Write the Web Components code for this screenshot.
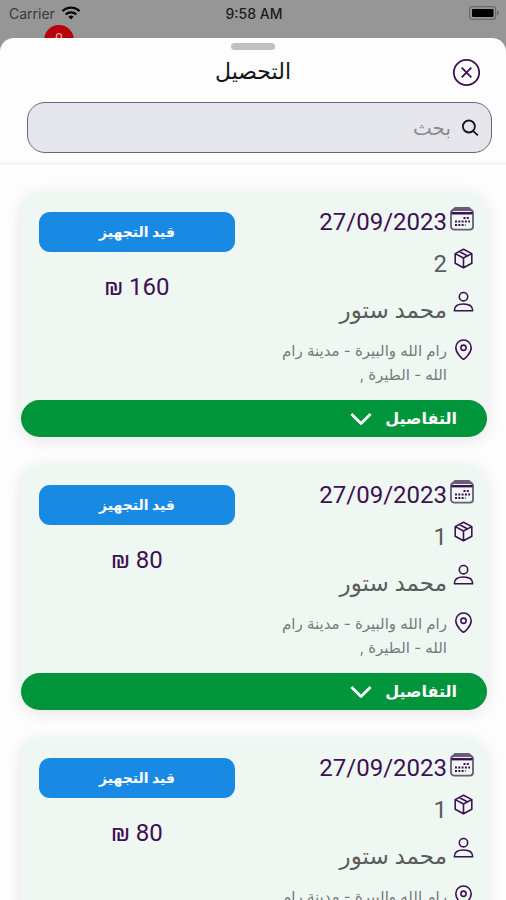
<!DOCTYPE html>
<html lang="ar" dir="rtl">
<head>
<meta charset="utf-8">
<meta name="viewport" content="width=device-width, initial-scale=1">
<title>التحصيل</title>
<style>
  body { margin: 0; font-family: Roboto, "DejaVu Sans", sans-serif; color: #3d0f54; background: #969696; }
</style>
</head>
<body>
<collection-app></collection-app>
<script>
const ICONS = {
  calendar: '<g stroke="#6b5a78"><rect x="1" y="3" width="22" height="19.600" rx="3"/><path d="M2.500 3.500l2.500-2.500h14l2.500 2.500"/></g><path d="M1.500 6.200h21" stroke-width="2.400"/><path d="M13.500 11h6.500M5 14.500h15M5 18h10.500" stroke-width="2" stroke-dasharray="2 1.300"/>',
  box: '<path d="M12 1.500l9.500 4.900v11L12 22.500l-9.500-5.100v-11zM2.500 6.400l9.500 5 9.500-5M12 11.400v11M7.200 4l9.600 5.100"/>',
  person: '<circle cx="12" cy="6.500" r="4.800"/><path d="M1.500 22.500c0-5 4-7.600 10.500-7.600s10.500 2.600 10.500 7.600z"/>',
  pin: '<path d="M12 23c-1 0-8.800-6.600-8.800-13a8.800 8.800 0 0 1 17.600 0c0 6.400-7.800 13-8.800 13z"/><circle cx="12" cy="10" r="3"/>',
  search: '<circle cx="10.500" cy="10" r="8"/><path d="M16 15.800l6.500 6" />',
  close: '<circle cx="12" cy="12" r="10.500"/><path d="M8 8l8 8M16 8l-8 8"/>',
  chevron: '<path d="M1.500 6.500l10.500 10.500 10.500-10.500"/>'
};

class AppIcon extends HTMLElement {
  connectedCallback() {
    this.attachShadow({ mode: 'open' }).innerHTML = `
      <style>
        :host { display: block; flex: none; width: var(--icon-size, 24px); height: var(--icon-size, 24px); }
        svg { display: block; width: 100%; height: 100%; fill: none; stroke: currentColor; stroke-width: var(--icon-stroke, 1.5); stroke-linejoin: round; }
      </style>
      <svg viewBox="0 0 24 24" aria-hidden="true">${ICONS[this.getAttribute('name')]}</svg>`;
  }
}
customElements.define('app-icon', AppIcon);

class StatusBar extends HTMLElement {
  connectedCallback() {
    this.attachShadow({ mode: 'open' }).innerHTML = `
      <style>
        :host { display: grid; grid-template-columns: 1fr auto 1fr; align-items: center; direction: ltr; height: 26px; padding: 0 7px 0 9px; font-family: Inter, sans-serif; font-size: 14px; color: #1c1c1c; }
        .carrier { display: flex; align-items: center; gap: 6px; color: #3a3a3a; }
        .time { font-weight: 500; }
        svg { display: block; }
        .battery { justify-self: end; }
      </style>
      <span class="carrier">Carrier
        <svg width="20" height="14" viewBox="0 0 20 14" fill="none" stroke="#080808" stroke-width="2.400"><path d="M1.500 5.200a12 12 0 0 1 17 0M4.700 8.500a7.600 7.600 0 0 1 10.600 0"/><path d="M10 13.500l-2.600-2.700a3.700 3.700 0 0 1 5.200 0z" fill="#080808" stroke="none"/></svg>
      </span>
      <span class="time">9:58 AM</span>
      <svg class="battery" width="30" height="14" viewBox="0 0 30 14"><rect x=".6" y=".6" width="26" height="12.800" rx="3" fill="none" stroke="#6a6a6a" stroke-width="1.200"/><rect x="3" y="3" width="21.500" height="8" rx="1" fill="#000"/><path d="M28 4.500c2.200.8 2.200 4.200 0 5z" fill="#6a6a6a"/></svg>`;
  }
}
customElements.define('status-bar', StatusBar);

class SearchField extends HTMLElement {
  connectedCallback() {
    this.attachShadow({ mode: 'open' }).innerHTML = `
      <style>
        :host { display: block; }
        label { display: flex; align-items: center; gap: 10px; box-sizing: border-box; height: 51px; padding: 0 12px; border: 1px solid #6b6480; border-radius: 18px; background: #e5e6eb; color: #16131c; --icon-size: 18px; --icon-stroke: 2.4; }
        input { flex: 1; min-width: 0; border: 0; padding: 0; outline: 0; background: none; font: inherit; font-size: 20px; line-height: 28px; color: inherit; }
        input::placeholder { color: #8c8c90; opacity: 1; }
      </style>
      <label><app-icon name="search"></app-icon><input type="search" placeholder="بحث" aria-label="بحث"></label>`;
  }
}
customElements.define('search-field', SearchField);

class SheetHeader extends HTMLElement {
  connectedCallback() {
    this.attachShadow({ mode: 'open' }).innerHTML = `
      <style>
        :host { display: block; padding: 5px 0 9px; border-bottom: 3px solid #f5f5f6; }
        .grip { width: 44px; height: 7px; margin: 0 auto; border-radius: 4px; background: #c0c0c0; }
        .bar { display: grid; grid-template-columns: 1fr auto 1fr; align-items: center; height: 44px; padding: 0 25px; margin-bottom: 8px; }
        h1 { margin: 0; font-size: 22px; line-height: 32px; font-weight: 400; color: #151515; }
        button { justify-self: start; padding: 0; border: 0; background: none; color: #3d0f54; --icon-size: 29px; cursor: pointer; }
        search-field { margin: 0 14px 0 27px; }
      </style>
      <div class="grip"></div>
      <div class="bar"><button aria-label="إغلاق"><app-icon name="close"></app-icon></button><h1><slot></slot></h1></div>
      <search-field></search-field>`;
  }
}
customElements.define('sheet-header', SheetHeader);

class InfoRow extends HTMLElement {
  connectedCallback() {
    this.attachShadow({ mode: 'open' }).innerHTML = `
      <style>
        :host { display: flex; align-items: flex-start; gap: 3px; font-size: 24px; color: #5a5d5b; }
        app-icon { color: #3d0f54; --icon-size: var(--row-icon, 21px); --icon-stroke: 1.8; }
        .icon { display: flex; flex: none; width: 24px; }
      </style>
      <span class="icon"><app-icon name="${this.getAttribute('icon')}"></app-icon></span><span><slot></slot></span>`;
  }
}
customElements.define('info-row', InfoRow);

class OrderCard extends HTMLElement {
  connectedCallback() {
    const a = n => this.getAttribute(n);
    this.attachShadow({ mode: 'open' }).innerHTML = `
      <style>
        :host { display: block; border-radius: 20px; background: #eff7f2; box-shadow: 0 3px 16px rgba(0, 0, 0, .1); }
        .body { display: flex; justify-content: space-between; padding: 15px 13px 13px 18px; }
        .info { display: flex; flex-direction: column; gap: 8px; flex: 0 1 200px; min-width: 0; }
        .date { color: #3d0f54; line-height: 30px; --row-icon: 24px; }
        .count { padding: 3px 0; line-height: 32px; }
        .name { font-size: 23px; line-height: 40px; }
        .place { font-family: Inter, "DejaVu Sans", sans-serif; font-size: 15px; line-height: 24px; color: #777a78; }
        .side { display: flex; flex-direction: column; align-items: stretch; gap: 20px; flex: 0 0 196px; padding-top: 5px; }
        .status { height: 40px; padding: 0; border: 0; border-radius: 11px; background: #198ae3; color: #fff; font: inherit; font-size: 14px; font-weight: 700; line-height: 24px; }
        .price { text-align: center; font-size: 24px; line-height: 30px; }
        .more { display: flex; align-items: center; gap: 13px; width: 100%; height: 37px; padding: 0 30px; border: 0; border-radius: 19px; background: #00953b; color: #fff; font: inherit; font-size: 16px; font-weight: 700; line-height: 28px; --icon-size: 22px; --icon-stroke: 3; cursor: pointer; }
      </style>
      <div class="body">
        <div class="info">
          <info-row class="date" icon="calendar">${a('date')}</info-row>
          <info-row class="count" icon="box">${a('count')}</info-row>
          <info-row class="name" icon="person">${a('name')}</info-row>
          <info-row class="place" icon="pin"><slot></slot></info-row>
        </div>
        <div class="side">
          <button class="status">${a('status')}</button>
          <div class="price">${a('price')} ₪</div>
        </div>
      </div>
      <button class="more">التفاصيل<app-icon name="chevron"></app-icon></button>`;
  }
}
customElements.define('order-card', OrderCard);

class CollectionApp extends HTMLElement {
  connectedCallback() {
    const cards = [['2', '160'], ['1', '80'], ['1', '80']].map(([count, price]) => `
      <order-card date="27/09/2023" count="${count}" name="محمد ستور" status="قيد التجهيز" price="${price}">رام الله والبيرة - مدينة رام الله - الطيرة ,</order-card>`).join('');
    this.attachShadow({ mode: 'open' }).innerHTML = `
      <style>
        :host { display: flex; flex-direction: column; height: 100vh; position: relative; overflow: hidden; }
        .behind { flex: none; height: 38px; }
        .badge { position: absolute; top: 25px; left: 44px; width: 30px; height: 30px; border-radius: 50%; background: #b8000b; color: #e0b0b0; text-align: center; font-size: 14px; line-height: 28px; }
        .sheet { position: relative; display: flex; flex: 1; flex-direction: column; min-height: 0; border-radius: 14px 14px 0 0; background: #fdfdfd; overflow: hidden; }
        .list { display: flex; flex: 1; flex-direction: column; gap: 28px; min-height: 0; padding: 27px 19px 28px 21px; overflow-y: auto; scrollbar-width: none; }
        order-card { flex: none; }
      </style>
      <div class="behind"><status-bar></status-bar><span class="badge">0</span></div>
      <main class="sheet">
        <sheet-header>التحصيل</sheet-header>
        <div class="list">${cards}</div>
      </main>`;
  }
}
customElements.define('collection-app', CollectionApp);
</script>
</body>
</html>
